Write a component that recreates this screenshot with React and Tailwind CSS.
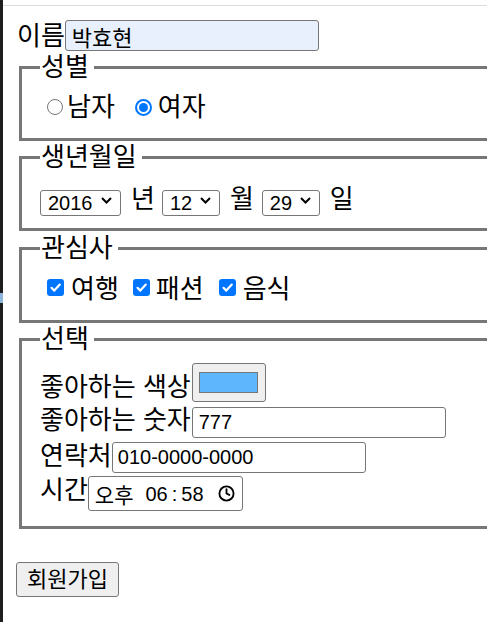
import { Clock } from "lucide-react";

function Fieldset({ title, className = "", children }) {
  return (
    <fieldset
      className={`ml-[16px] w-[500px] border-[3px] border-[#777] pl-[18px] ${className}`}
    >
      <legend className="pl-[1px] pr-[5px] text-[26px] leading-[27px]">
        {title}
      </legend>
      {children}
    </fieldset>
  );
}

function Select({ value, className = "" }) {
  return (
    <div className={`relative mt-[5px] h-[26px] ${className}`}>
      <select
        defaultValue={value}
        className="h-full w-full appearance-none rounded-[3px] border border-[#767676] bg-white pl-[7px] text-[20px] leading-[24px]"
      >
        <option>{value}</option>
      </select>
      <svg
        className="pointer-events-none absolute right-[9px] top-[10px]"
        width="11"
        height="7"
        viewBox="0 0 11 7"
        fill="none"
      >
        <path d="M1 1l4.5 4.5L10 1" stroke="#000" strokeWidth="2" />
      </svg>
    </div>
  );
}

function Radio({ checked, className = "" }) {
  if (checked) {
    return (
      <span
        className={`mt-[6px] flex h-[17px] w-[17px] shrink-0 items-center justify-center rounded-full border-[2px] border-[#0075ff] bg-white ${className}`}
      >
        <span className="h-[9px] w-[9px] rounded-full bg-[#0075ff]" />
      </span>
    );
  }
  return (
    <span
      className={`mt-[6px] h-[16px] w-[16px] shrink-0 rounded-full border-[1.5px] border-[#767676] bg-white ${className}`}
    />
  );
}

function Checkbox({ className = "" }) {
  return (
    <span
      className={`mt-[4px] flex h-[17px] w-[17px] shrink-0 items-center justify-center rounded-[3px] bg-[#0075ff] ${className}`}
    >
      <svg width="13" height="13" viewBox="0 0 13 13" fill="none">
        <path
          d="M2.5 6.8l2.8 2.8L10.8 3.6"
          stroke="#fff"
          strokeWidth="2.2"
          strokeLinecap="round"
          strokeLinejoin="round"
        />
      </svg>
    </span>
  );
}

export default function App() {
  return (
    <div className="flex h-[622px] w-[487px] overflow-hidden bg-white text-black font-['Liberation_Sans','Noto_Sans_CJK_KR',sans-serif]">
      {/* window edge */}
      <div className="w-[3px] shrink-0 bg-[#1e1e1e] pt-[293px]">
        <div className="h-[10px] w-[3px] bg-[#8db6dc]" />
      </div>

      <div className="min-w-0 flex-1 pt-[5px]">
        <div className="border-t border-[#dcdcdc]">
          <form onSubmit={(e) => e.preventDefault()} className="pt-[14px]">
            {/* 이름 */}
            <div className="flex items-center pl-[14px]">
              <label className="text-[26px] leading-[28px]">이름</label>
              <input
                type="text"
                defaultValue="박효현"
                className="h-[31px] w-[254px] rounded-[3px] border border-[#767676] bg-[#e8f0fe] pl-[6px] text-[22px] leading-[24px] outline-none"
              />
            </div>

            {/* 성별 */}
            <Fieldset title="성별" className="mt-[3px] pt-[12px] pb-[17px]">
              <div className="flex items-start text-[26px] leading-[28px]">
                <Radio className="ml-[7px]" />
                <span className="ml-[4px]">남자</span>
                <Radio checked className="ml-[20px]" />
                <span className="ml-[6px]">여자</span>
              </div>
            </Fieldset>

            {/* 생년월일 */}
            <Fieldset title="생년월일" className="mt-[3px] pt-[11px] pb-[15px]">
              <div className="flex items-start text-[26px] leading-[28px]">
                <Select value="2016" className="w-[81px]" />
                <span className="ml-[10px] mt-[3px]">년</span>
                <Select value="12" className="ml-[7px] w-[58px]" />
                <span className="ml-[10px] mt-[3px]">월</span>
                <Select value="29" className="ml-[8px] w-[58px]" />
                <span className="ml-[10px] mt-[3px]">일</span>
              </div>
            </Fieldset>

            {/* 관심사 */}
            <Fieldset title="관심사" className="mt-[4px] pt-[13px] pb-[17px]">
              <div className="flex items-start text-[26px] leading-[28px]">
                <Checkbox className="ml-[7px]" />
                <span className="ml-[7px]">여행</span>
                <Checkbox className="ml-[14px]" />
                <span className="ml-[6px]">패션</span>
                <Checkbox className="ml-[15px]" />
                <span className="ml-[7px]">음식</span>
              </div>
            </Fieldset>

            {/* 선택 */}
            <Fieldset title="선택" className="mt-[3px] pt-[10px] pb-[15px]">
              <div className="flex items-start">
                <span className="mt-[12px] text-[26px] leading-[24px]">좋아하는 색상</span>
                <span className="ml-[1px] flex h-[39px] w-[74px] items-center justify-center rounded-[3px] border border-[#767676] bg-[#efefef]">
                  <span className="h-[21px] w-[59px] border border-[#777] bg-[#5eb6fd]" />
                </span>
              </div>
              <div className="mt-[5px] flex items-start">
                <span className="mt-[1px] text-[26px] leading-[24px]">좋아하는 숫자</span>
                <input
                  type="text"
                  defaultValue="777"
                  className="ml-[1px] h-[31px] w-[254px] rounded-[3px] border border-[#767676] bg-white pl-[6px] text-[20px] leading-[24px] outline-none"
                />
              </div>
              <div className="mt-[4px] flex items-start">
                <span className="mt-[2px] text-[26px] leading-[24px]">연락처</span>
                <input
                  type="text"
                  defaultValue="010-0000-0000"
                  className="h-[31px] w-[254px] rounded-[3px] border border-[#767676] bg-white pl-[5px] text-[20px] leading-[24px] outline-none"
                />
              </div>
              <div className="mt-[3px] flex items-start">
                <span className="mt-[2px] text-[26px] leading-[24px]">시간</span>
                <div className="flex h-[35px] w-[155px] items-center rounded-[3px] border border-[#767676] bg-white pl-[6px] text-[20px] leading-[24px]">
                  <span className="text-[21px] font-['Noto_Sans_CJK_KR',sans-serif]">오후</span>
                  <span className="ml-[12px]">06</span>
                  <span className="ml-[4px]">:</span>
                  <span className="ml-[4px]">58</span>
                  <Clock className="ml-[14px] h-[17px] w-[17px]" strokeWidth={2.6} />
                </div>
              </div>
            </Fieldset>

            <button
              type="submit"
              className="ml-[13px] mt-[33px] h-[35px] rounded-[3px] border border-[#767676] bg-[#efefef] px-[10px] text-[22px] leading-[24px]"
            >
              회원가입
            </button>
          </form>
        </div>
      </div>
    </div>
  );
}
